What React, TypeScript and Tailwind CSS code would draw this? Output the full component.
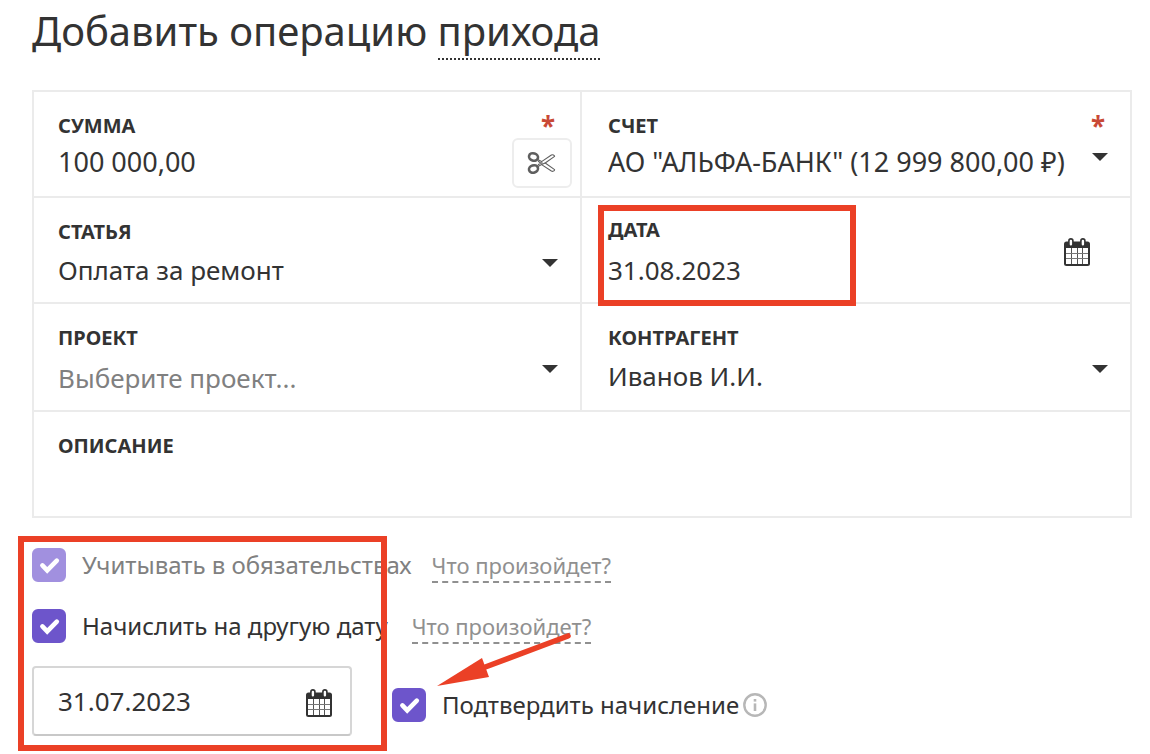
import React, { useState } from 'react';
import clsx from 'clsx';

const CalendarIcon: React.FC = () => (
  <svg width="26" height="28" viewBox="0 0 26 28" aria-hidden="true">
    <rect x="0" y="3.5" width="26" height="24.5" rx="2.5" fill="#333333" />
    <rect x="2" y="10" width="22" height="16" fill="#ffffff" />
    <path d="M7.5 10v16M13.5 10v16M18.5 10v16" stroke="#555555" strokeWidth="1" />
    <path d="M2 15.5h22M2 20.5h22" stroke="#777777" strokeWidth="1" />
    <rect x="4.9" y="0.9" width="4" height="7.4" rx="2" fill="#ffffff" stroke="#333333" strokeWidth="1.6" />
    <rect x="16.9" y="0.9" width="4" height="7.4" rx="2" fill="#ffffff" stroke="#333333" strokeWidth="1.6" />
  </svg>
);

const ScissorsIcon: React.FC = () => (
  <svg width="30" height="26" viewBox="0 0 30 26" fill="none" stroke="#5f5f5f" aria-hidden="true">
    <ellipse cx="6.5" cy="7" rx="4.6" ry="3.6" strokeWidth="2.6" transform="rotate(18 6.5 7)" />
    <ellipse cx="6.5" cy="19" rx="4.6" ry="3.6" strokeWidth="2.6" transform="rotate(-18 6.5 19)" />
    <path d="M10.6 9.4l4 2.2 9.8-6.6c1.4-.7 3 .2 3.2 1.4L18.2 13l9.4 6.6c-.2 1.4-1.8 2.2-3.2 1.4L14.6 14.6l-4 2.2" strokeWidth="1.1" strokeLinejoin="round" />
    <path d="M11 11l2.6 2-2.6 2M14.6 14.6l3.6-1.6" strokeWidth="1.1" />
    <circle cx="14.8" cy="13" r="0.6" strokeWidth="0.8" />
  </svg>
);

const InfoIcon: React.FC = () => (
  <svg width="24" height="24" viewBox="0 0 24 24" fill="none" stroke="#b7b7b7" aria-hidden="true">
    <circle cx="12" cy="12" r="10.7" strokeWidth="2.4" />
    <path d="M12 10.4V18" strokeWidth="2.6" />
    <path d="M12 6v2.6" strokeWidth="2.6" />
  </svg>
);

const Caret: React.FC = () => (
  <svg width="16" height="8" viewBox="0 0 16 8" className="pointer-events-none absolute right-[22px] top-[61px]" aria-hidden="true">
    <path d="M0 0h16L8 8z" fill="#333333" />
  </svg>
);

const Required: React.FC = () => (
  <span className="pointer-events-none absolute right-[25px] top-5 text-[26px] leading-7 font-bold text-[#c94936]">*</span>
);

interface FieldProps {
  id: string;
  label: string;
  className?: string;
  children: React.ReactNode;
}

const Field: React.FC<FieldProps> = ({ id, label, className, children }) => (
  <div className={clsx('relative flex flex-col border-[#ebebeb]', className)}>
    <label htmlFor={id} className="self-start text-xl leading-6 font-bold uppercase">{label}</label>
    {children}
  </div>
);

const control = 'h-9 w-full bg-transparent leading-9 outline-none appearance-none';

interface CheckProps {
  id: string;
  label: string;
  disabled?: boolean;
}

const Check: React.FC<CheckProps> = ({ id, label, disabled }) => {
  const [checked, setChecked] = useState(true);

  return (
    <div className="flex items-center gap-4">
      <span className="relative size-[34px] shrink-0">
        <input
          id={id}
          type="checkbox"
          checked={checked}
          disabled={disabled}
          onChange={(e) => setChecked(e.target.checked)}
          className="block size-[34px] appearance-none rounded-md border-2 border-[#d0d0d0] checked:border-[#6d55cb] checked:bg-[#6d55cb] disabled:border-[#a190df] disabled:bg-[#a190df]"
        />
        {checked && (
          <svg viewBox="0 0 34 34" className="pointer-events-none absolute inset-0" aria-hidden="true">
            <path d="M10.4 17.4l4.8 5 9.6-9.8" fill="none" stroke="#ffffff" strokeWidth="4.6" strokeLinejoin="miter" strokeLinecap="round" />
          </svg>
        )}
      </span>
      <label htmlFor={id} className={clsx('text-2xl leading-8 whitespace-nowrap', disabled && 'text-[#808080]')}>{label}</label>
    </div>
  );
};

const Hint: React.FC = () => (
  <a href="#" className="mt-0.5 border-b-2 border-dashed border-[#909090] text-[22px] leading-8 whitespace-nowrap text-[#909090]">Что произойдет?</a>
);

export default function App() {
  const [amount, setAmount] = useState('100 000,00');
  const [date, setDate] = useState('31.08.2023');
  const [accrualDate, setAccrualDate] = useState('31.07.2023');

  return (
    <main className="bg-white pr-[18px] pl-8 font-['Noto_Sans','Open_Sans',sans-serif] text-[#333333]">
      <h1 className="pt-1 text-[40px] leading-[54px] whitespace-nowrap">
        Добавить операцию{' '}
        <button type="button" className="h-14 border-b-2 border-dotted border-[#333333] leading-[54px]">прихода</button>
      </h1>

      <form className="mt-[30px]">
        <div className="grid grid-cols-2 border-2 border-[#ebebeb]">
          <Field id="amount" label="Сумма" className="h-[106px] border-r-2 border-b-2 pt-[22px] pl-6">
            <input id="amount" className={clsx(control, 'mt-1.5 text-[27px]')} value={amount} onChange={(e) => setAmount(e.target.value)} />
            <Required />
            <button type="button" aria-label="Разделить сумму" className="absolute right-2 bottom-2 flex h-[50px] w-[60px] items-center justify-center rounded-md border-2 border-[#ededed] bg-white">
              <ScissorsIcon />
            </button>
          </Field>
          <Field id="account" label="Счет" className="h-[106px] border-b-2 pt-[22px] pl-[26px]">
            <select id="account" className={clsx(control, 'mt-1.5 text-[27px]')}>
              <option>АО "АЛЬФА-БАНК" (12 999 800,00 ₽)</option>
            </select>
            <Required />
            <Caret />
          </Field>

          <Field id="category" label="Статья" className="h-[106px] border-r-2 border-b-2 pt-[22px] pl-6">
            <select id="category" className={clsx(control, 'mt-2 text-[26px]')}>
              <option>Оплата за ремонт</option>
            </select>
            <Caret />
          </Field>
          <Field id="date" label="Дата" className="h-[106px] border-b-2 pt-5 pl-[26px]">
            <input id="date" className={clsx(control, 'mt-2.5 text-[26px]')} value={date} onChange={(e) => setDate(e.target.value)} />
            <button type="button" aria-label="Выбрать дату" className="absolute top-10 right-10">
              <CalendarIcon />
            </button>
            {/* highlight frame */}
            <div className="pointer-events-none absolute top-[7px] left-4 z-10 h-[101px] w-[258px] border-6 border-[#eb4026]" />
          </Field>

          <Field id="project" label="Проект" className="h-[108px] border-r-2 border-b-2 pt-[22px] pl-6">
            <select id="project" className={clsx(control, 'mt-2.5 text-[26px] text-[#808080]')}>
              <option>Выберите проект...</option>
            </select>
            <Caret />
          </Field>
          <Field id="partner" label="Контрагент" className="h-[108px] border-b-2 pt-[22px] pl-[26px]">
            <select id="partner" className={clsx(control, 'mt-2 text-[26px]')}>
              <option>Иванов И.И.</option>
            </select>
            <Caret />
          </Field>

          <Field id="description" label="Описание" className="col-span-2 h-[104px] pt-[22px] pl-6">
            <textarea id="description" className={clsx(control, 'mt-1.5 resize-none text-[26px]')} />
          </Field>
        </div>

        <div className="relative pt-[30px] pb-[18px]">
          <div className="flex h-[34px] items-center gap-5">
            <Check id="liabilities" label="Учитывать в обязательствах" disabled />
            <Hint />
          </div>
          <div className="mt-[27px] flex h-[34px] items-center gap-6">
            <Check id="accrue" label="Начислить на другую дату" />
            <Hint />
          </div>
          <div className="mt-[23px] flex items-center gap-10">
            <div className="relative w-80">
              <input
                aria-label="Дата начисления"
                value={accrualDate}
                onChange={(e) => setAccrualDate(e.target.value)}
                className="block h-[70px] w-full rounded border-2 border-[#d6d6d6] border-b-[#c8c8c8] pl-6 text-[26px] outline-none"
              />
              <button type="button" aria-label="Выбрать дату начисления" className="absolute top-[23px] right-5">
                <CalendarIcon />
              </button>
            </div>
            <div className="flex items-center gap-1 pt-2">
              <Check id="confirm" label="Подтвердить начисление" />
              <InfoIcon />
            </div>
          </div>

          {/* highlight frame and pointer */}
          <div className="pointer-events-none absolute top-[18px] -left-3.5 h-[215px] w-[369px] border-6 border-[#eb4026]" />
          <svg width="138" height="60" viewBox="0 0 138 60" className="pointer-events-none absolute top-[112px] left-[404px]" aria-hidden="true">
            <path d="M132 6L48 37.5" stroke="#eb4026" strokeWidth="5.6" strokeLinecap="round" />
            <path d="M1 56L46 28l7 19z" fill="#eb4026" />
          </svg>
        </div>
      </form>
    </main>
  );
}
